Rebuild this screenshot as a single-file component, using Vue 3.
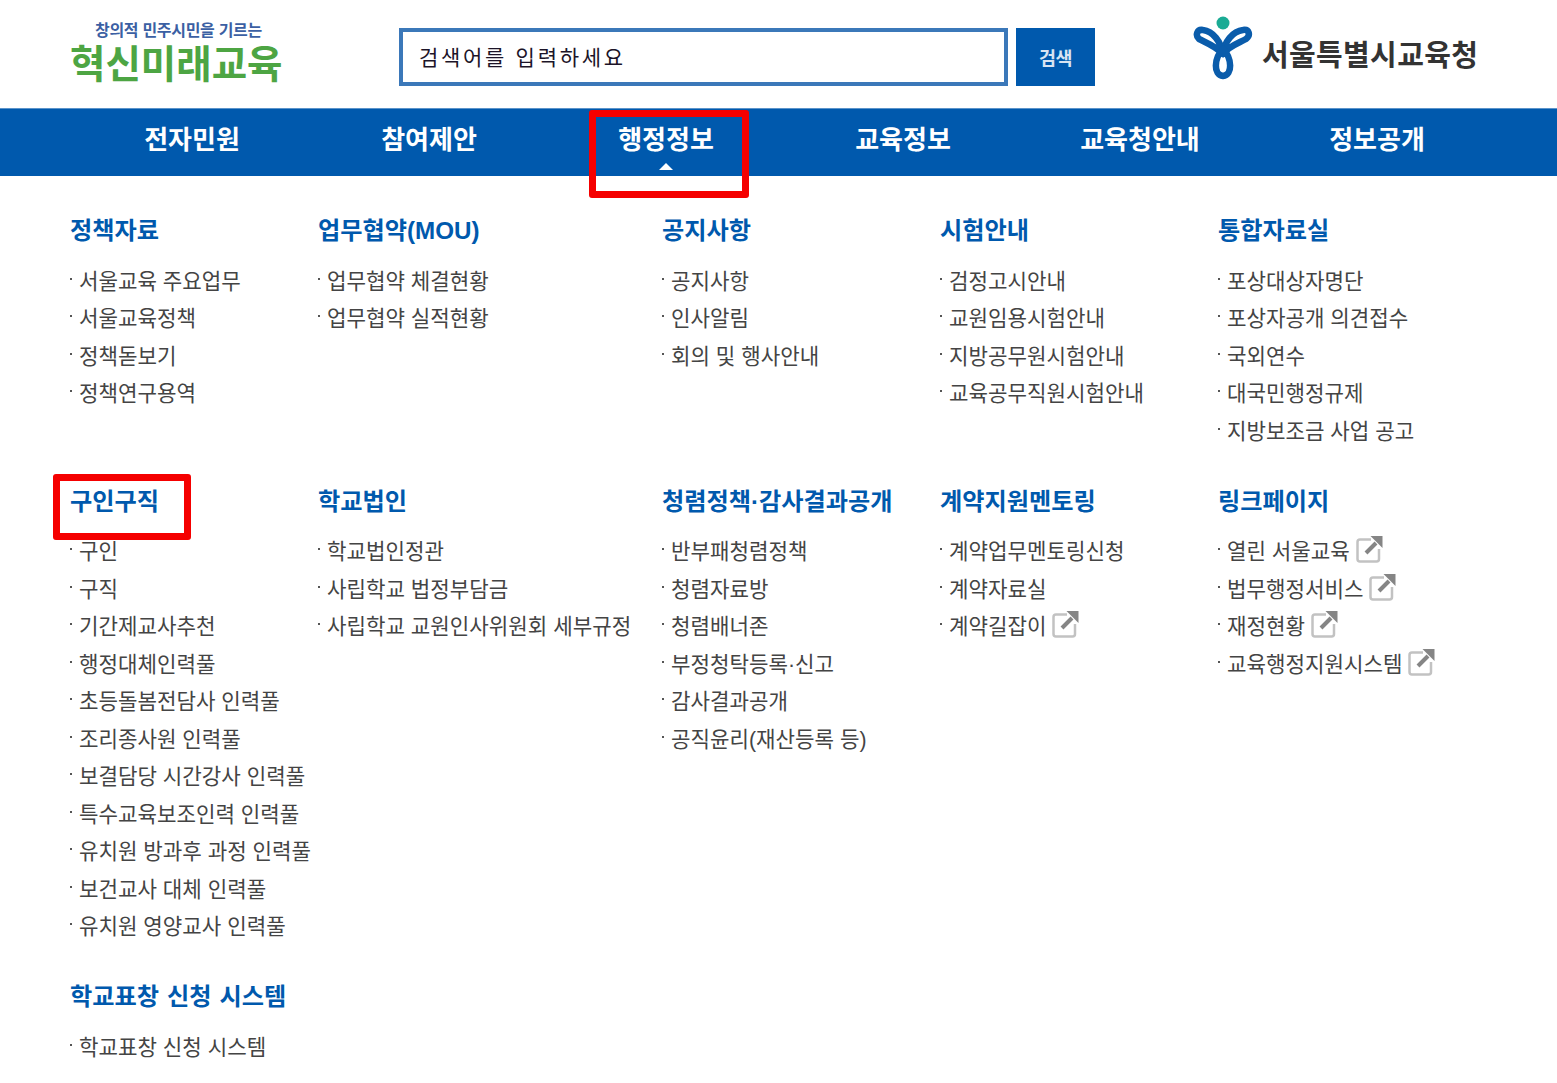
<script setup>
const navItems = ["전자민원", "참여제안", "행정정보", "교육정보", "교육청안내", "정보공개"];

const sections = [
  { title: "정책자료", items: ["서울교육 주요업무", "서울교육정책", "정책돋보기", "정책연구용역"] },
  { title: "업무협약(MOU)", items: ["업무협약 체결현황", "업무협약 실적현황"] },
  { title: "공지사항", items: ["공지사항", "인사알림", "회의 및 행사안내"] },
  { title: "시험안내", items: ["검정고시안내", "교원임용시험안내", "지방공무원시험안내", "교육공무직원시험안내"] },
  { title: "통합자료실", items: ["포상대상자명단", "포상자공개 의견접수", "국외연수", "대국민행정규제", "지방보조금 사업 공고"] },
  {
    title: "구인구직",
    marked: true,
    items: [
      "구인", "구직", "기간제교사추천", "행정대체인력풀", "초등돌봄전담사 인력풀", "조리종사원 인력풀",
      "보결담당 시간강사 인력풀", "특수교육보조인력 인력풀", "유치원 방과후 과정 인력풀", "보건교사 대체 인력풀", "유치원 영양교사 인력풀",
    ],
  },
  { title: "학교법인", items: ["학교법인정관", "사립학교 법정부담금", "사립학교 교원인사위원회 세부규정"] },
  { title: "청렴정책·감사결과공개", items: ["반부패청렴정책", "청렴자료방", "청렴배너존", "부정청탁등록·신고", "감사결과공개", "공직윤리(재산등록 등)"] },
  { title: "계약지원멘토링", items: ["계약업무멘토링신청", "계약자료실", { text: "계약길잡이", external: true }] },
  {
    title: "링크페이지",
    items: [
      { text: "열린 서울교육", external: true },
      { text: "법무행정서비스", external: true },
      { text: "재정현황", external: true },
      { text: "교육행정지원시스템", external: true },
    ],
  },
  { title: "학교표창 신청 시스템", items: ["학교표창 신청 시스템"] },
];

const label = (item) => (typeof item === "string" ? item : item.text);
const isExternal = (item) => typeof item !== "string" && item.external;
</script>

<template>
  <div class="page">
    <header class="top">
      <a class="brand">
        <span class="brand-sub">창의적 민주시민을 기르는</span>
        <span class="brand-main">혁신미래교육</span>
      </a>
      <form class="search" @submit.prevent>
        <input class="search-input" type="text" placeholder="검색어를 입력하세요" />
        <button class="search-btn" type="submit">검색</button>
      </form>
      <div class="office">
        <svg class="office-mark" width="60" height="66" viewBox="0 0 60 66" fill="none">
          <circle cx="30" cy="7" r="6.500" fill="#1aab94" />
          <g stroke="#0a5cab" stroke-width="6.500" stroke-linejoin="round">
            <path d="M30 38 C24 31 14 27 6 23 C2 19 4 13 10 14 C20 15 28 26 30 38 Z" />
            <path d="M30 38 C31 26 40 15 50 14 C56 13 58 19 53 23 C46 27 36 30 30 38 Z" />
            <path d="M30 33 C21 42 20 59 30 60 C40 59 39 42 30 33 Z" />
          </g>
        </svg>
        <span class="office-name">서울특별시교육청</span>
      </div>
    </header>

    <nav class="gnb">
      <a v-for="item in navItems" :key="item" class="gnb-item" :class="{ active: item === '행정정보' }">
        {{ item }}
        <span v-if="item === '행정정보'" class="gnb-caret"></span>
        <span v-if="item === '행정정보'" class="mark mark-nav"></span>
      </a>
    </nav>

    <main class="menu">
      <section v-for="sec in sections" :key="sec.title" class="sec">
        <h3 class="sec-title">
          {{ sec.title }}
          <span v-if="sec.marked" class="mark mark-title"></span>
        </h3>
        <ul class="sec-list">
          <li v-for="item in sec.items" :key="label(item)" class="sec-item">
            {{ label(item) }}
            <svg v-if="isExternal(item)" class="ext" width="27" height="28" viewBox="0 0 27 28" fill="none">
              <path d="M15 4.500 H4 Q1.500 4.500 1.500 7 V24 Q1.500 26.500 4 26.500 H20.500 Q23 26.500 23 24 V14" stroke="#c2c2c2" stroke-width="2.500" />
              <path d="M10 18 L20 8" stroke="#858585" stroke-width="4" />
              <path d="M14.500 1 H26.500 V13 Z" fill="#858585" />
            </svg>
          </li>
        </ul>
      </section>
    </main>
  </div>
</template>

<style>
html,
body {
  margin: 0;
  background: #fff;
}
</style>

<style scoped>
.page {
  width: 1557px;
  height: 1083px;
  overflow: hidden;
  font-family: "Liberation Sans", "Noto Sans CJK KR", sans-serif;
}

.top {
  display: flex;
  align-items: flex-start;
  height: 108px;
  padding-left: 70px;
  box-sizing: border-box;
}

.brand {
  display: flex;
  flex-direction: column;
  width: 329px;
  padding-top: 19px;
  font-weight: 700;
}
.brand-sub {
  margin-left: 25px;
  font-size: 16px;
  line-height: 24px;
  letter-spacing: -0.300px;
  color: #3b5fa3;
}
.brand-main {
  font-size: 38.500px;
  line-height: 44px;
  color: #4da543;
}

.search {
  display: flex;
  gap: 8px;
  margin-top: 28px;
}
.search-input {
  width: 609px;
  height: 58px;
  box-sizing: border-box;
  padding: 2px 16px 0;
  border: 4px solid #3b78b9;
  outline: none;
  font-family: inherit;
  font-size: 21px;
  letter-spacing: 2.700px;
}
.search-input::placeholder {
  color: #1c1428;
  opacity: 1;
}
.search-btn {
  width: 79px;
  height: 58px;
  border: none;
  background: #0059ad;
  color: #d8e4f2;
  font-family: inherit;
  font-size: 18.500px;
  font-weight: 700;
  letter-spacing: -0.500px;
}

.office {
  display: flex;
  align-items: center;
  margin-left: 98px;
  margin-top: 16px;
}
.office-name {
  margin-left: 9px;
  margin-top: 7px;
  font-size: 29px;
  font-weight: 700;
  letter-spacing: 0.350px;
  color: #333;
  white-space: nowrap;
}

.gnb {
  display: flex;
  height: 68px;
  padding-left: 73.500px;
  background: #0059ad;
  border-top: 1px solid #5b93ca;
  box-sizing: border-box;
}
.gnb-item {
  position: relative;
  width: 237px;
  padding-top: 11px;
  text-align: center;
  font-size: 26px;
  line-height: 40px;
  font-weight: 700;
  color: #fff;
}
.gnb-caret {
  position: absolute;
  left: 50%;
  top: 54px;
  margin-left: -7px;
  border-left: 7px solid transparent;
  border-right: 7px solid transparent;
  border-bottom: 7px solid #fff;
}

.mark {
  position: absolute;
  box-sizing: border-box;
  border: 7px solid #f50000;
  border-radius: 3px;
}
.mark-nav {
  left: 41px;
  top: 1px;
  width: 160px;
  height: 88px;
}
.mark-title {
  left: -17px;
  top: -9px;
  width: 138px;
  height: 66px;
}

.menu {
  display: grid;
  grid-template-columns: 248px 344px 278px 278px 1fr;
  row-gap: 34.500px;
  padding: 36px 0 0 70px;
}

.sec-title {
  position: relative;
  margin: 0 0 11.500px;
  font-size: 24.200px;
  line-height: 37px;
  font-weight: 700;
  word-spacing: 1.300px;
  color: #0059ad;
  white-space: nowrap;
}
.sec-list {
  margin: 0;
  padding: 0;
  list-style: none;
}
.sec-item {
  position: relative;
  display: flex;
  align-items: center;
  height: 37.500px;
  padding-left: 9px;
  font-size: 21.200px;
  color: #444;
  white-space: nowrap;
}
.sec-item::before {
  content: "";
  position: absolute;
  left: 0;
  top: 17px;
  width: 2px;
  height: 2px;
  background: #555;
}
.ext {
  margin-left: 6px;
  margin-top: -1px;
  flex-shrink: 0;
}
</style>
